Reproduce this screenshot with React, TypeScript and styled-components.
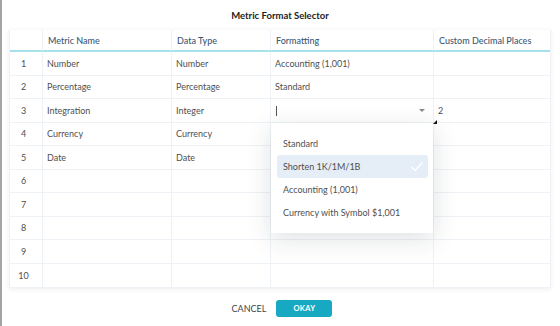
import * as React from 'react';
import styled, { createGlobalStyle } from 'styled-components';

type Row = { name: string; type: string; format: string; decimals: string };

const rows: Row[] = [
  { name: 'Number', type: 'Number', format: 'Accounting (1,001)', decimals: '' },
  { name: 'Percentage', type: 'Percentage', format: 'Standard', decimals: '' },
  { name: 'Integration', type: 'Integer', format: '', decimals: '2' },
  { name: 'Currency', type: 'Currency', format: '', decimals: '' },
  { name: 'Date', type: 'Date', format: '', decimals: '' },
  { name: '', type: '', format: '', decimals: '' },
  { name: '', type: '', format: '', decimals: '' },
  { name: '', type: '', format: '', decimals: '' },
  { name: '', type: '', format: '', decimals: '' },
  { name: '', type: '', format: '', decimals: '' },
];

const options = ['Standard', 'Shorten 1K/1M/1B', 'Accounting (1,001)', 'Currency with Symbol $1,001'];
const EDIT_ROW = 2;

const App = () => {
  const [selected] = React.useState(1);
  return (
    <>
      <GlobalStyle />
      <Dialog>
        <Title>Metric Format Selector</Title>
        <Table>
          <HeadCell />
          <HeadCell>Metric Name</HeadCell>
          <HeadCell>Data Type</HeadCell>
          <HeadCell>Formatting</HeadCell>
          <HeadCell $last>Custom Decimal Places</HeadCell>
          {rows.map((r, i) => (
            <React.Fragment key={i}>
              <Cell $center>{i + 1}</Cell>
              <Cell>{r.name}</Cell>
              <Cell>{r.type}</Cell>
              {i === EDIT_ROW ? (
                <EditCell>
                  <Caret />
                  <Arrow />
                  <FillHandle />
                  <Menu>
                    {options.map((o, k) => (
                      <Option key={o} $active={k === selected}>
                        {o}
                        {k === selected && (
                          <svg width="14" height="11" viewBox="0 0 14 11">
                            <polyline points="1.5,6 5,9.5 12.5,1.5" fill="none" stroke="#fff" strokeWidth="1.4" />
                          </svg>
                        )}
                      </Option>
                    ))}
                  </Menu>
                </EditCell>
              ) : (
                <Cell>{r.format}</Cell>
              )}
              <Cell $last>{r.decimals}</Cell>
            </React.Fragment>
          ))}
        </Table>
        <Footer>
          <CancelButton>CANCEL</CancelButton>
          <OkButton>OKAY</OkButton>
        </Footer>
      </Dialog>
    </>
  );
};

const GlobalStyle = createGlobalStyle`
  html, body {
    margin: 0;
    padding: 0;
    background: #fff;
  }
  body {
    font-family: Lato, "Liberation Sans", sans-serif;
  }
`;

const Dialog = styled.div`
  width: 560px;
  height: 326px;
  box-sizing: border-box;
  border-left: 2px solid #a4a4a4;
  padding: 1px 9px 0 7px;
  display: flex;
  flex-direction: column;
`;

const Title = styled.div`
  height: 29px;
  line-height: 29px;
  text-align: center;
  font-size: 9.5px;
  font-weight: 700;
  color: #222;
`;

const Table = styled.div`
  display: grid;
  grid-template-columns: 33px 129px 99px 163px 1fr;
  grid-template-rows: 22px repeat(10, 23.5px);
  border: 1px solid #eef2f6;
  border-top: none;
  box-shadow: 0 1px 5px rgba(40, 60, 90, 0.09);
  font-size: 9px;
`;

const HeadCell = styled.div<{ $last?: boolean }>`
  display: flex;
  align-items: center;
  padding: 0 5px;
  color: #3b5877;
  font-weight: 500;
  border-bottom: 2px solid #a6e2ec;
  border-right: ${(p) => (p.$last ? 'none' : '1px solid #eef2f6')};
  box-sizing: border-box;
`;

const Cell = styled.div<{ $center?: boolean; $last?: boolean }>`
  display: flex;
  align-items: center;
  justify-content: ${(p) => (p.$center ? 'center' : 'flex-start')};
  padding: 0 5px 0 ${(p) => (p.$center ? '0' : '4px')};
  color: #4f4f4f;
  border-bottom: 1px solid #eef2f6;
  border-right: ${(p) => (p.$last ? 'none' : '1px solid #eef2f6')};
  box-sizing: border-box;
  &:nth-last-child(-n + 5) {
    border-bottom: none;
  }
`;

const EditCell = styled.div`
  position: relative;
  border-bottom: 1px solid #eef2f6;
  border-right: 1px solid #eef2f6;
  background: #fff;
  box-sizing: border-box;
`;

const Caret = styled.span`
  position: absolute;
  left: 5px;
  top: 7px;
  width: 1px;
  height: 10px;
  background: #555;
`;

const Arrow = styled.span`
  position: absolute;
  right: 8px;
  top: 10px;
  width: 0;
  height: 0;
  border-left: 3px solid transparent;
  border-right: 3px solid transparent;
  border-top: 3px solid #8a8a8a;
`;

const FillHandle = styled.span`
  position: absolute;
  right: -4px;
  bottom: -2px;
  width: 0;
  height: 0;
  border-left: 4px solid transparent;
  border-bottom: 4px solid #111;
  z-index: 3;
`;

const Menu = styled.div`
  position: absolute;
  top: calc(100% + 1px);
  left: 0;
  width: 162px;
  box-sizing: border-box;
  padding: 9px 5px 9px 6px;
  background: #fff;
  box-shadow: 0 6px 24px rgba(30, 40, 60, 0.14);
  z-index: 2;
`;

const Option = styled.div<{ $active?: boolean }>`
  height: 23px;
  display: flex;
  align-items: center;
  justify-content: space-between;
  padding: 0 4px 0 6px;
  border-radius: 3px;
  font-size: 9px;
  color: #4f4f4f;
  background: ${(p) => (p.$active ? '#e5edf6' : 'transparent')};
`;

const Footer = styled.div`
  display: flex;
  justify-content: center;
  align-items: center;
  gap: 10px;
  margin-top: 12px;
  padding-left: 4px;
`;

const CancelButton = styled.button`
  border: none;
  background: none;
  padding: 0;
  font-family: Lato, "Liberation Sans", sans-serif;
  font-size: 9px;
  color: #444;
`;

const OkButton = styled.button`
  width: 56px;
  height: 17px;
  border: none;
  border-radius: 3px;
  background: #17a9c1;
  color: #fff;
  font-family: Lato, "Liberation Sans", sans-serif;
  font-size: 7.5px;
  font-weight: 700;
  letter-spacing: 0.3px;
`;

export default App;
